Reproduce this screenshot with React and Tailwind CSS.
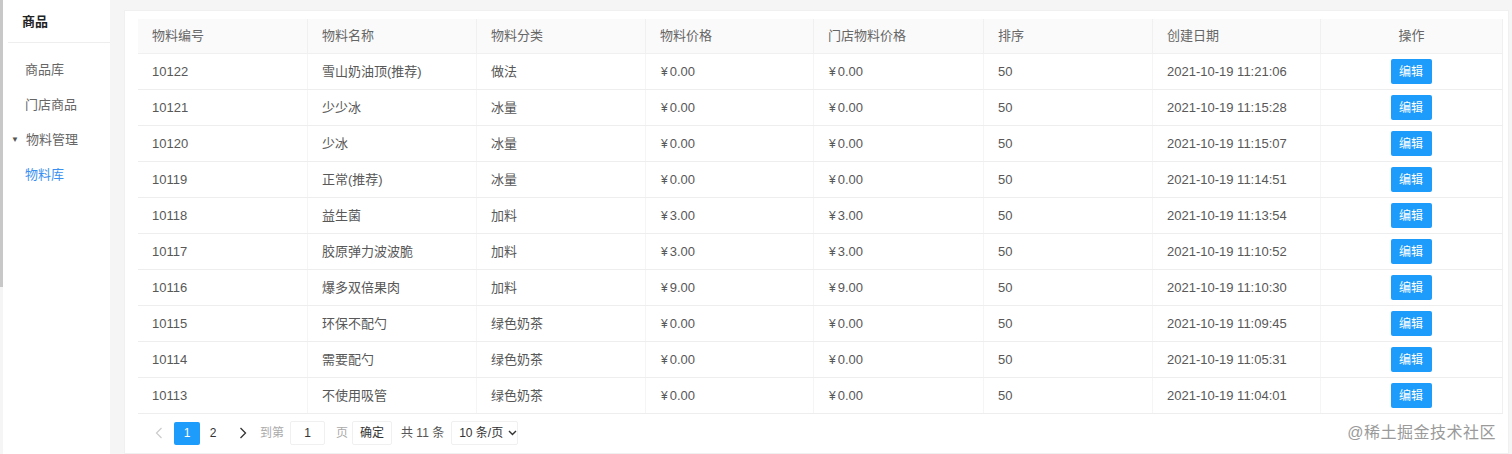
import React from 'react';

// material list rows
const ROWS = [
    { id: '10122', name: '雪山奶油顶(推荐)', cat: '做法', price: '0.00', store: '0.00', sort: 50, date: '2021-10-19 11:21:06' },
    { id: '10121', name: '少少冰', cat: '冰量', price: '0.00', store: '0.00', sort: 50, date: '2021-10-19 11:15:28' },
    { id: '10120', name: '少冰', cat: '冰量', price: '0.00', store: '0.00', sort: 50, date: '2021-10-19 11:15:07' },
    { id: '10119', name: '正常(推荐)', cat: '冰量', price: '0.00', store: '0.00', sort: 50, date: '2021-10-19 11:14:51' },
    { id: '10118', name: '益生菌', cat: '加料', price: '3.00', store: '3.00', sort: 50, date: '2021-10-19 11:13:54' },
    { id: '10117', name: '胶原弹力波波脆', cat: '加料', price: '3.00', store: '3.00', sort: 50, date: '2021-10-19 11:10:52' },
    { id: '10116', name: '爆多双倍果肉', cat: '加料', price: '9.00', store: '9.00', sort: 50, date: '2021-10-19 11:10:30' },
    { id: '10115', name: '环保不配勺', cat: '绿色奶茶', price: '0.00', store: '0.00', sort: 50, date: '2021-10-19 11:09:45' },
    { id: '10114', name: '需要配勺', cat: '绿色奶茶', price: '0.00', store: '0.00', sort: 50, date: '2021-10-19 11:05:31' },
    { id: '10113', name: '不使用吸管', cat: '绿色奶茶', price: '0.00', store: '0.00', sort: 50, date: '2021-10-19 11:04:01' }
];

const HEADERS = ['物料编号', '物料名称', '物料分类', '物料价格', '门店物料价格', '排序', '创建日期'];

const COLS = 'grid grid-cols-[170px_169px_169px_168px_170px_169px_168px_182px]';

export default function App() {
    return (
        <div className="flex h-[454px] w-[1512px] overflow-hidden bg-[#f5f5f5] text-[13px] text-[#585858]" style={{ fontFamily: '"Liberation Sans", "Noto Sans CJK SC", sans-serif' }}>
            {/* sidebar */}
            <div className="flex">
                <div className="w-[3px] h-[287px] bg-[#c8c8c8]"></div>
                <div className="w-[107px] bg-white flex flex-col">
                    <div className="h-[43px] flex items-center text-[#222] font-bold text-[13px] border-b border-[#eee] ml-[5px] pt-[1px]">
                        <span className="pl-[14px]">商品</span>
                    </div>
                    <div className="pl-[22px] text-[#666] flex flex-col">
                        <div className="h-[35px] flex items-center mt-[9px]">商品库</div>
                        <div className="h-[35px] flex items-center">门店商品</div>
                        <div className="h-[35px] flex items-center -ml-[14px]">
                            <span className="text-[8px] text-[#555] mr-[7px]">▼</span>物料管理
                        </div>
                        <div className="h-[35px] flex items-center text-[#3b8ff0]">物料库</div>
                    </div>
                </div>
            </div>

            {/* content */}
            <div className="flex-1 pl-[14px] pt-[10px] pr-[5px]">
                <div className="h-full bg-white pl-[13px] pt-[8px] pr-[5px] border border-[#f0f0f0]">
                    <div className="w-[1365px]">
                        <div className={COLS + ' h-[35px] bg-[#fafafa] text-[#666] border-b border-[#f0f0f0]'}>
                            {HEADERS.map((h) => (
                                <div key={h} className="pl-[14px] flex items-center border-r border-[#f0f0f0]">{h}</div>
                            ))}
                            <div className="flex items-center justify-center border-r border-[#f0f0f0]">操作</div>
                        </div>
                        {ROWS.map((r) => (
                            <div key={r.id} className={COLS + ' h-[36px] border-b border-[#eee]'}>
                                <div className="pl-[14px] flex items-center border-r border-[#f5f5f5]">{r.id}</div>
                                <div className="pl-[14px] flex items-center border-r border-[#f5f5f5]">{r.name}</div>
                                <div className="pl-[14px] flex items-center border-r border-[#f5f5f5]">{r.cat}</div>
                                <div className="pl-[15px] flex items-center border-r border-[#f5f5f5]">
                                    <span className="text-[12px] mr-[2px]">¥</span>{r.price}
                                </div>
                                <div className="pl-[15px] flex items-center border-r border-[#f5f5f5]">
                                    <span className="text-[12px] mr-[2px]">¥</span>{r.store}
                                </div>
                                <div className="pl-[14px] flex items-center border-r border-[#f5f5f5]">{r.sort}</div>
                                <div className="pl-[14px] flex items-center border-r border-[#f5f5f5]">{r.date}</div>
                                <div className="flex items-center justify-center border-r border-[#f0f0f0] pr-[1px]">
                                    <button className="w-[41px] h-[25px] bg-[#1e9cfb] text-white text-[12px] rounded-[2px]">编辑</button>
                                </div>
                            </div>
                        ))}
                    </div>

                    {/* pagination */}
                    <div className="flex items-center h-[24px] mt-[7px] text-[12px] whitespace-nowrap">
                        <span className="w-[26px] flex justify-center text-[#ccc] ml-[8px]">
                            <svg width="8" height="12" viewBox="0 0 8 12"><path d="M6.5 1 L1.5 6 L6.5 11" fill="none" stroke="currentColor" strokeWidth="1.2" /></svg>
                        </span>
                        <span className="w-[26px] h-[23px] rounded-[2px] bg-[#1e9cfb] text-white flex items-center justify-center ml-[2px]">1</span>
                        <span className="w-[26px] flex justify-center text-[#333]">2</span>
                        <span className="w-[30px] flex justify-center text-[#333] ml-[2px]">
                            <svg width="8" height="12" viewBox="0 0 8 12"><path d="M1.5 1 L6.5 6 L1.5 11" fill="none" stroke="currentColor" strokeWidth="1.3" /></svg>
                        </span>
                        <span className="text-[#aaa] ml-[2px]">到第</span>
                        <span className="w-[35px] h-[24px] border border-[#f0f0f0] rounded-[2px] ml-[6px] flex items-center justify-center text-[#333]">1</span>
                        <span className="text-[#aaa] ml-[11px]">页</span>
                        <span className="w-[40px] h-[24px] border border-[#f0f0f0] rounded-[2px] ml-[4px] flex items-center justify-center text-[#333]">确定</span>
                        <span className="ml-[9px] text-[#555]">共 11 条</span>
                        <span className="w-[67px] h-[24px] border border-[#f0f0f0] rounded-[2px] ml-[7px] flex items-center pl-[7px] text-[#333]">
                            10 条/页
                            <svg className="ml-[5px]" width="9" height="6" viewBox="0 0 9 6"><path d="M1 1 L4.5 4.5 L8 1" fill="none" stroke="#333" strokeWidth="1.4" /></svg>
                        </span>
                        <span className="ml-auto mr-[7px] text-[16px] text-[#9a9a9a] tracking-[0.5px]">@稀土掘金技术社区</span>
                    </div>
                </div>
            </div>
        </div>
    );
}
